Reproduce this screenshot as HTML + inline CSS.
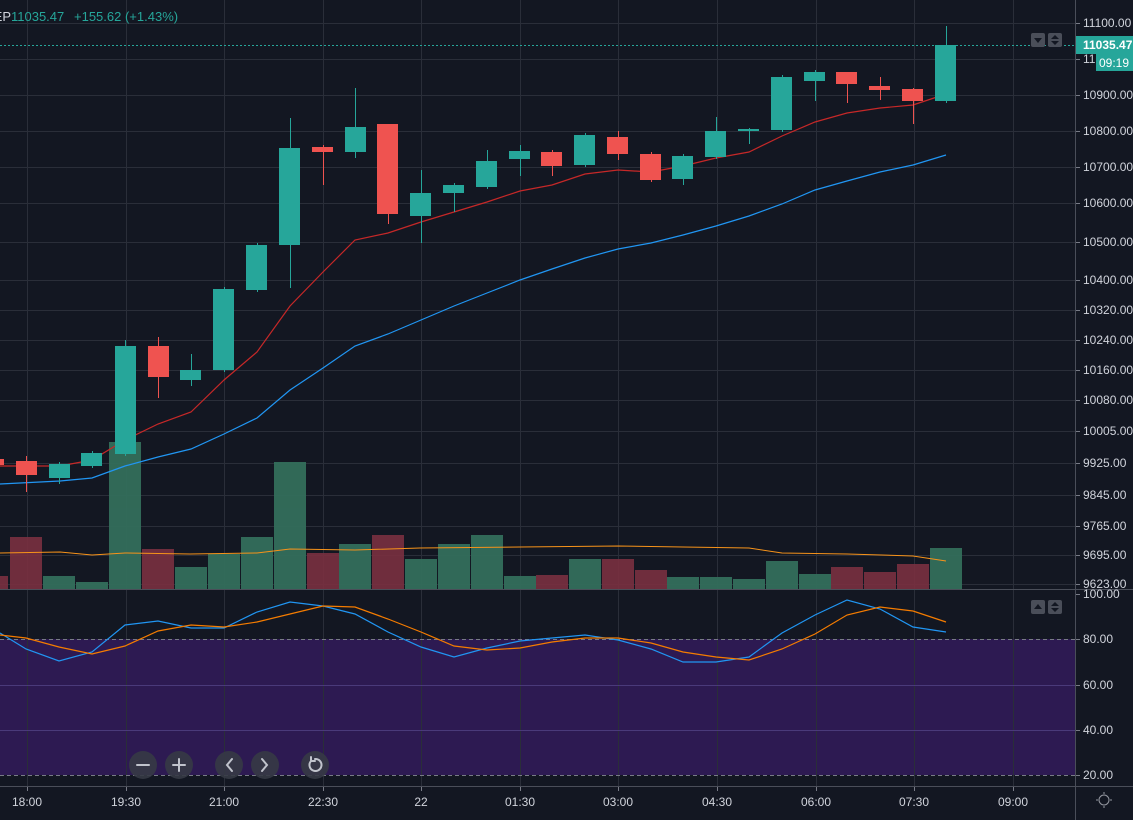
<!DOCTYPE html>
<html><head><meta charset="utf-8"><style>
html,body{margin:0;padding:0;background:#131722;width:1133px;height:820px;overflow:hidden}
svg{display:block}
text{font-family:"Liberation Sans",sans-serif;font-size:12px;fill:#d1d4dc}
</style></head><body>
<svg width="1133" height="820" viewBox="0 0 1133 820">
<rect width="1133" height="820" fill="#131722"/>
<rect x="0" y="639" width="1075" height="136" fill="#2d1a52"/>
<g stroke="#2a2e39" stroke-width="1">
<line x1="27.5" y1="0" x2="27.5" y2="786"/><line x1="126.5" y1="0" x2="126.5" y2="786"/><line x1="224.5" y1="0" x2="224.5" y2="786"/><line x1="323.5" y1="0" x2="323.5" y2="786"/><line x1="421.5" y1="0" x2="421.5" y2="786"/><line x1="520.5" y1="0" x2="520.5" y2="786"/><line x1="618.5" y1="0" x2="618.5" y2="786"/><line x1="717.5" y1="0" x2="717.5" y2="786"/><line x1="816.5" y1="0" x2="816.5" y2="786"/><line x1="914.5" y1="0" x2="914.5" y2="786"/><line x1="1013.5" y1="0" x2="1013.5" y2="786"/>
<line x1="0" y1="23.5" x2="1075" y2="23.5"/><line x1="0" y1="59.5" x2="1075" y2="59.5"/><line x1="0" y1="95.5" x2="1075" y2="95.5"/><line x1="0" y1="131.5" x2="1075" y2="131.5"/><line x1="0" y1="167.5" x2="1075" y2="167.5"/><line x1="0" y1="203.5" x2="1075" y2="203.5"/><line x1="0" y1="242.5" x2="1075" y2="242.5"/><line x1="0" y1="280.5" x2="1075" y2="280.5"/><line x1="0" y1="310.5" x2="1075" y2="310.5"/><line x1="0" y1="340.5" x2="1075" y2="340.5"/><line x1="0" y1="370.5" x2="1075" y2="370.5"/><line x1="0" y1="400.5" x2="1075" y2="400.5"/><line x1="0" y1="431.5" x2="1075" y2="431.5"/><line x1="0" y1="463.5" x2="1075" y2="463.5"/><line x1="0" y1="495.5" x2="1075" y2="495.5"/><line x1="0" y1="526.5" x2="1075" y2="526.5"/><line x1="0" y1="555.5" x2="1075" y2="555.5"/><line x1="0" y1="584.5" x2="1075" y2="584.5"/>
<line x1="0" y1="685.5" x2="1075" y2="685.5" stroke="#4a3a7a"/><line x1="0" y1="730.5" x2="1075" y2="730.5" stroke="#4a3a7a"/>
</g>
<line x1="0" y1="639.5" x2="1075" y2="639.5" stroke="#787b86" stroke-dasharray="4,3"/>
<line x1="0" y1="775.5" x2="1075" y2="775.5" stroke="#787b86" stroke-dasharray="4,3"/>
<line x1="0" y1="589.5" x2="1133" y2="589.5" stroke="#4a4e59"/>
<line x1="0" y1="786.5" x2="1133" y2="786.5" stroke="#4a4e59"/>
<line x1="1075.5" y1="0" x2="1075.5" y2="820" stroke="#4a4e59"/>
<g fill="#7a3040" opacity="0.9">
<rect x="-24" y="576" width="32" height="13"/><rect x="10" y="537" width="32" height="52"/><rect x="142" y="549" width="32" height="40"/><rect x="307" y="553" width="32" height="36"/><rect x="372" y="535" width="32" height="54"/><rect x="536" y="575" width="32" height="14"/><rect x="602" y="559" width="32" height="30"/><rect x="635" y="570" width="32" height="19"/><rect x="831" y="567" width="32" height="22"/><rect x="864" y="572" width="32" height="17"/><rect x="897" y="564" width="32" height="25"/>
</g>
<g fill="#336e5b" opacity="0.95">
<rect x="43" y="576" width="32" height="13"/><rect x="76" y="582" width="32" height="7"/><rect x="109" y="442" width="32" height="147"/><rect x="175" y="567" width="32" height="22"/><rect x="208" y="554" width="32" height="35"/><rect x="241" y="537" width="32" height="52"/><rect x="274" y="462" width="32" height="127"/><rect x="339" y="544" width="32" height="45"/><rect x="405" y="559" width="32" height="30"/><rect x="438" y="544" width="32" height="45"/><rect x="471" y="535" width="32" height="54"/><rect x="504" y="576" width="32" height="13"/><rect x="569" y="559" width="32" height="30"/><rect x="667" y="577" width="32" height="12"/><rect x="700" y="577" width="32" height="12"/><rect x="733" y="579" width="32" height="10"/><rect x="766" y="561" width="32" height="28"/><rect x="799" y="574" width="32" height="15"/><rect x="930" y="548" width="32" height="41"/>
</g>
<polyline fill="none" stroke="#f7931a" stroke-width="1" points="0,553 60,552 92,555 125,553 190,554 257,553 290,549 355,550 420,548 520,547 618,546 683,547 749,548 782,553 847,554 913,556 946,561"/>
<polyline fill="none" stroke="#c62828" stroke-width="1.2" points="0,466 60,466 92,460 125,440 158,424 191,412 224,380 257,352 290,306 323,272 355,240 388,233 421,222 454,212 487,202 520,191 552,185 585,174 618,170 651,172 683,166 716,158 749,152 782,136 815,122 847,113 880,108 913,105 946,94"/>
<polyline fill="none" stroke="#2196f3" stroke-width="1.2" points="0,484 60,481 92,478 125,466 158,457 191,449 224,434 257,418 290,390 323,368 355,346 388,334 421,320 454,306 487,293 520,280 552,269 585,258 618,249 651,243 683,235 716,226 749,216 782,204 815,190 847,181 880,172 913,165 946,155"/>
<g stroke-width="1">
<g stroke="#ef5350"><line x1="26.5" y1="456" x2="26.5" y2="492"/><line x1="158.5" y1="337" x2="158.5" y2="398"/><line x1="323.5" y1="145" x2="323.5" y2="185"/><line x1="388.5" y1="124" x2="388.5" y2="224"/><line x1="552.5" y1="150" x2="552.5" y2="176"/><line x1="618.5" y1="131" x2="618.5" y2="160"/><line x1="651.5" y1="152" x2="651.5" y2="182"/><line x1="847.5" y1="72" x2="847.5" y2="103"/><line x1="880.5" y1="77" x2="880.5" y2="100"/><line x1="913.5" y1="88" x2="913.5" y2="124"/></g>
<g stroke="#26a69a"><line x1="59.5" y1="462" x2="59.5" y2="484"/><line x1="92.5" y1="451" x2="92.5" y2="468"/><line x1="125.5" y1="340" x2="125.5" y2="456"/><line x1="191.5" y1="354" x2="191.5" y2="386"/><line x1="224.5" y1="287" x2="224.5" y2="372"/><line x1="257.5" y1="243" x2="257.5" y2="292"/><line x1="290.5" y1="118" x2="290.5" y2="288"/><line x1="355.5" y1="88" x2="355.5" y2="158"/><line x1="421.5" y1="170" x2="421.5" y2="243"/><line x1="454.5" y1="183" x2="454.5" y2="212"/><line x1="487.5" y1="150" x2="487.5" y2="189"/><line x1="520.5" y1="145" x2="520.5" y2="176"/><line x1="585.5" y1="133" x2="585.5" y2="167"/><line x1="683.5" y1="154" x2="683.5" y2="185"/><line x1="716.5" y1="117" x2="716.5" y2="159"/><line x1="749.5" y1="128" x2="749.5" y2="144"/><line x1="782.5" y1="75" x2="782.5" y2="132"/><line x1="815.5" y1="70" x2="815.5" y2="101"/><line x1="946.5" y1="26" x2="946.5" y2="103"/></g>
</g>
<g fill="#ef5350">
<rect x="-8" y="459" width="12" height="6"/><rect x="16" y="461" width="21" height="14"/><rect x="148" y="346" width="21" height="31"/><rect x="312" y="147" width="21" height="5"/><rect x="377" y="124" width="21" height="90"/><rect x="541" y="152" width="21" height="14"/><rect x="607" y="137" width="21" height="17"/><rect x="640" y="154" width="21" height="26"/><rect x="836" y="72" width="21" height="12"/><rect x="869" y="86" width="21" height="4"/><rect x="902" y="89" width="21" height="12"/>
</g>
<g fill="#26a69a">
<rect x="49" y="464" width="21" height="14"/><rect x="81" y="453" width="21" height="13"/><rect x="115" y="346" width="21" height="108"/><rect x="180" y="370" width="21" height="10"/><rect x="213" y="289" width="21" height="81"/><rect x="246" y="245" width="21" height="45"/><rect x="279" y="148" width="21" height="97"/><rect x="345" y="127" width="21" height="25"/><rect x="410" y="193" width="21" height="23"/><rect x="443" y="185" width="21" height="8"/><rect x="476" y="161" width="21" height="26"/><rect x="509" y="151" width="21" height="8"/><rect x="574" y="135" width="21" height="30"/><rect x="672" y="156" width="21" height="23"/><rect x="705" y="131" width="21" height="26"/><rect x="738" y="129" width="21" height="2"/><rect x="771" y="77" width="21" height="53"/><rect x="804" y="72" width="21" height="9"/><rect x="935" y="45" width="21" height="56"/>
</g>
<polyline fill="none" stroke="#2196f3" stroke-width="1.2" points="0,633 26,649 59,661 92,652 125,625 158,621 191,628 224,628 257,612 290,602 323,606 355,614 388,632 421,647 454,657 487,648 520,641 552,638 585,635 618,640 651,649 683,662 716,662 749,657 782,633 815,615 847,600 880,609 913,627 946,632"/>
<polyline fill="none" stroke="#f57c00" stroke-width="1.2" points="0,635 26,638 59,647 92,654 125,646 158,631 191,625 224,627 257,622 290,614 323,606 355,607 388,619 421,632 454,646 487,650 520,648 552,642 585,638 618,638 651,643 683,652 716,657 749,660 782,649 815,634 847,615 880,607 913,611 946,622"/>
<line x1="0" y1="45.5" x2="1075" y2="45.5" stroke="#26a69a" stroke-dasharray="2,2"/>
<text x="11" y="21" text-anchor="end" style="font-size:13px">EP</text>
<text x="11" y="21" style="font-size:13px;fill:#26a69a">11035.47</text>
<text x="74" y="21" style="font-size:13px;fill:#26a69a">+155.62 (+1.43%)</text>
<rect x="1031" y="33" width="14" height="14" rx="2" fill="#4a4e59"/><path d="M1034 38h8l-4 5z" fill="#131722"/>
<rect x="1048" y="33" width="14" height="14" rx="2" fill="#4a4e59"/><path d="M1051 39l4-4 4 4zM1051 41l4 4 4-4z" fill="#131722"/>
<rect x="1031" y="600" width="14" height="14" rx="2" fill="#4a4e59"/><path d="M1034 609l4-5 4 5z" fill="#131722"/>
<rect x="1048" y="600" width="14" height="14" rx="2" fill="#4a4e59"/><path d="M1051 606l4-4 4 4zM1051 608l4 4 4-4z" fill="#131722"/>
<g stroke="#787b86"><line x1="1076" y1="23.5" x2="1080" y2="23.5"/><line x1="1076" y1="59.5" x2="1080" y2="59.5"/><line x1="1076" y1="95.5" x2="1080" y2="95.5"/><line x1="1076" y1="131.5" x2="1080" y2="131.5"/><line x1="1076" y1="167.5" x2="1080" y2="167.5"/><line x1="1076" y1="203.5" x2="1080" y2="203.5"/><line x1="1076" y1="242.5" x2="1080" y2="242.5"/><line x1="1076" y1="280.5" x2="1080" y2="280.5"/><line x1="1076" y1="310.5" x2="1080" y2="310.5"/><line x1="1076" y1="340.5" x2="1080" y2="340.5"/><line x1="1076" y1="370.5" x2="1080" y2="370.5"/><line x1="1076" y1="400.5" x2="1080" y2="400.5"/><line x1="1076" y1="431.5" x2="1080" y2="431.5"/><line x1="1076" y1="463.5" x2="1080" y2="463.5"/><line x1="1076" y1="495.5" x2="1080" y2="495.5"/><line x1="1076" y1="526.5" x2="1080" y2="526.5"/><line x1="1076" y1="555.5" x2="1080" y2="555.5"/><line x1="1076" y1="584.5" x2="1080" y2="584.5"/><line x1="1076" y1="594.5" x2="1080" y2="594.5"/><line x1="1076" y1="639.5" x2="1080" y2="639.5"/><line x1="1076" y1="685.5" x2="1080" y2="685.5"/><line x1="1076" y1="730.5" x2="1080" y2="730.5"/><line x1="1076" y1="775.5" x2="1080" y2="775.5"/></g>
<g>
<text x="1083" y="27">11100.00</text><text x="1083" y="63">11000.00</text><text x="1083" y="99">10900.00</text><text x="1083" y="135">10800.00</text><text x="1083" y="171">10700.00</text><text x="1083" y="207">10600.00</text><text x="1083" y="246">10500.00</text><text x="1083" y="284">10400.00</text><text x="1083" y="314">10320.00</text><text x="1083" y="344">10240.00</text><text x="1083" y="374">10160.00</text><text x="1083" y="404">10080.00</text><text x="1083" y="435">10005.00</text><text x="1083" y="467">9925.00</text><text x="1083" y="499">9845.00</text><text x="1083" y="530">9765.00</text><text x="1083" y="559">9695.00</text><text x="1083" y="588">9623.00</text>
<text x="1083" y="598">100.00</text><text x="1083" y="643">80.00</text><text x="1083" y="689">60.00</text><text x="1083" y="734">40.00</text><text x="1083" y="779">20.00</text>
</g>
<rect x="1076" y="36" width="57" height="18" fill="#26a69a"/>
<text x="1083" y="49" style="fill:#fff;font-weight:bold">11035.47</text>
<rect x="1096" y="54" width="37" height="17" fill="#26a69a"/>
<text x="1099" y="67" style="fill:#fff">09:19</text>
<g stroke="#787b86"><line x1="27.5" y1="787" x2="27.5" y2="791"/><line x1="126.5" y1="787" x2="126.5" y2="791"/><line x1="224.5" y1="787" x2="224.5" y2="791"/><line x1="323.5" y1="787" x2="323.5" y2="791"/><line x1="421.5" y1="787" x2="421.5" y2="791"/><line x1="520.5" y1="787" x2="520.5" y2="791"/><line x1="618.5" y1="787" x2="618.5" y2="791"/><line x1="717.5" y1="787" x2="717.5" y2="791"/><line x1="816.5" y1="787" x2="816.5" y2="791"/><line x1="914.5" y1="787" x2="914.5" y2="791"/><line x1="1013.5" y1="787" x2="1013.5" y2="791"/></g>
<g text-anchor="middle">
<text x="27" y="806">18:00</text><text x="126" y="806">19:30</text><text x="224" y="806">21:00</text><text x="323" y="806">22:30</text><text x="421" y="806">22</text><text x="520" y="806">01:30</text><text x="618" y="806">03:00</text><text x="717" y="806">04:30</text><text x="816" y="806">06:00</text><text x="914" y="806">07:30</text><text x="1013" y="806">09:00</text>
</g>
<circle cx="1104" cy="800" r="5" fill="none" stroke="#9598a1"/>
<g stroke="#9598a1"><line x1="1104" y1="792" x2="1104" y2="794"/><line x1="1104" y1="806" x2="1104" y2="808"/><line x1="1096" y1="800" x2="1098" y2="800"/><line x1="1110" y1="800" x2="1112" y2="800"/></g>
<g fill="#363a45" opacity="0.9"><circle cx="143" cy="765" r="14"/><circle cx="179" cy="765" r="14"/><circle cx="229" cy="765" r="14"/><circle cx="265" cy="765" r="14"/><circle cx="315" cy="765" r="14"/></g>
<g stroke="#c0c3cc" stroke-width="2" fill="none" stroke-linecap="round">
<line x1="137" y1="765" x2="149" y2="765"/><line x1="173" y1="765" x2="185" y2="765"/><line x1="179" y1="759" x2="179" y2="771"/>
<path d="M232 759l-5 6 5 6"/><path d="M262 759l5 6-5 6"/>
<path d="M311 761a6 6 0 1 0 4-2"/><path d="M311 757v4h4" />
</g>
</svg>
</body></html>
